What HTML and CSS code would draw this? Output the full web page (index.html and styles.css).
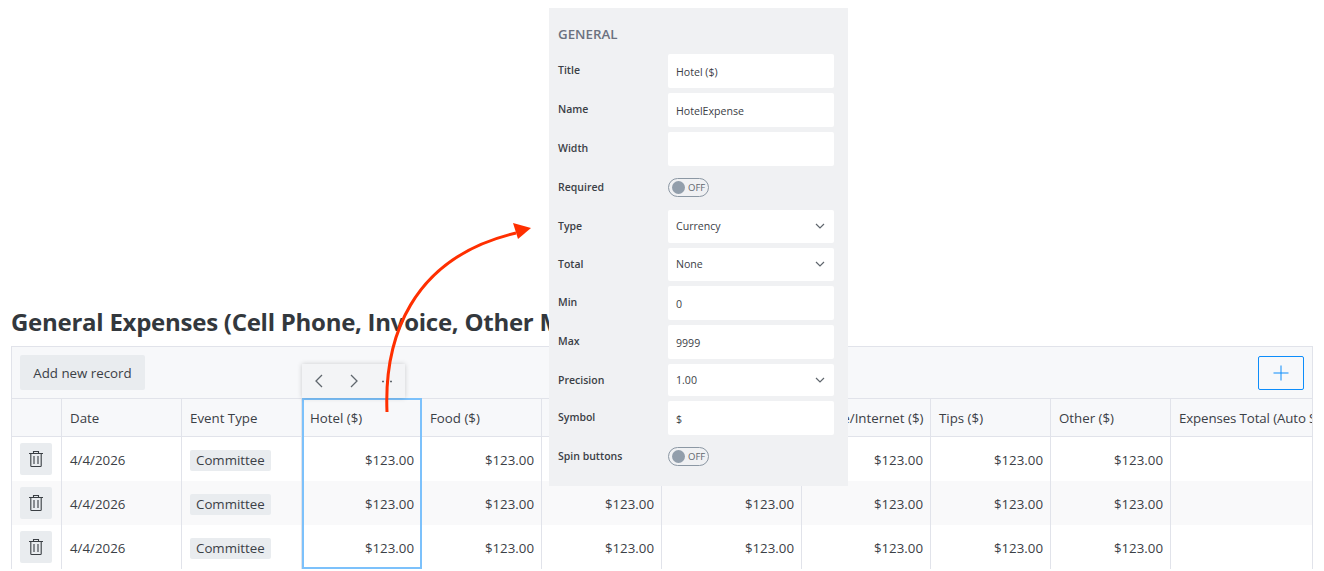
FILE: index.html
```html
<!DOCTYPE html>
<html lang="en">
<head>
<meta charset="utf-8">
<title>General Expenses</title>
<link rel="stylesheet" href="styles.css">
</head>
<body>
<div class="page">
  <h1 class="title">General Expenses (Cell Phone, Invoice, Other M</h1>
  <section class="grid-card">
    <div class="toolbar">
      <button class="btn-add">Add new record</button>
      <button class="btn-plus" aria-label="Add column"><svg width="16" height="16" viewBox="0 0 16 16"><path d="M8 .5v15M.5 8h15" stroke="#0d8dfb" stroke-width="1" fill="none"/></svg></button>
    </div>
    <div class="table-wrap">
      <table class="data">
        <colgroup>
          <col class="c-act"><col class="c-120"><col class="c-120"><col class="c-120"><col class="c-120"><col class="c-120"><col class="c-140"><col class="c-130"><col class="c-120"><col class="c-120"><col class="c-last">
        </colgroup>
        <thead>
          <tr><th></th><th>Date</th><th>Event Type</th><th>Hotel ($)</th><th>Food ($)</th><th></th><th></th><th class="th-right">Phone/Internet ($)</th><th>Tips ($)</th><th>Other ($)</th><th class="th-last">Expenses Total (Auto Sum)</th></tr>
        </thead>
        <tbody>
          <tr>
            <td class="cell-act"><button class="btn-del" aria-label="Delete"><svg width="16" height="18" viewBox="0 0 16 18"><path d="M1 3.5h14M5.500 3.500V1.500h5v2M2.800 3.500v12.200c0 .5.4.8.8.8h8.800c.4 0 .8-.3.8-.8V3.500M6 6v8M10 6v8" stroke="#3a3f44" stroke-width="1.100" fill="none"/></svg></button></td>
            <td>4/4/2026</td><td><span class="tag">Committee</span></td><td class="num">$123.00</td><td class="num">$123.00</td><td class="num"></td><td class="num"></td><td class="num">$123.00</td><td class="num">$123.00</td><td class="num">$123.00</td><td></td>
          </tr>
          <tr>
            <td class="cell-act"><button class="btn-del" aria-label="Delete"><svg width="16" height="18" viewBox="0 0 16 18"><path d="M1 3.5h14M5.500 3.500V1.500h5v2M2.800 3.500v12.200c0 .5.4.8.8.8h8.800c.4 0 .8-.3.8-.8V3.500M6 6v8M10 6v8" stroke="#3a3f44" stroke-width="1.100" fill="none"/></svg></button></td>
            <td>4/4/2026</td><td><span class="tag">Committee</span></td><td class="num">$123.00</td><td class="num">$123.00</td><td class="num">$123.00</td><td class="num">$123.00</td><td class="num">$123.00</td><td class="num">$123.00</td><td class="num">$123.00</td><td></td>
          </tr>
          <tr>
            <td class="cell-act"><button class="btn-del" aria-label="Delete"><svg width="16" height="18" viewBox="0 0 16 18"><path d="M1 3.5h14M5.500 3.500V1.500h5v2M2.800 3.500v12.200c0 .5.4.8.8.8h8.800c.4 0 .8-.3.8-.8V3.500M6 6v8M10 6v8" stroke="#3a3f44" stroke-width="1.100" fill="none"/></svg></button></td>
            <td>4/4/2026</td><td><span class="tag">Committee</span></td><td class="num">$123.00</td><td class="num">$123.00</td><td class="num">$123.00</td><td class="num">$123.00</td><td class="num">$123.00</td><td class="num">$123.00</td><td class="num">$123.00</td><td></td>
          </tr>
        </tbody>
      </table>
    </div>
  </section>

  <div class="col-select"></div>
  <div class="col-tools">
    <svg width="10" height="14" viewBox="0 0 10 14"><path d="M8 1 2 7l6 6" stroke="#5f666d" stroke-width="1.300" fill="none"/></svg>
    <svg width="10" height="14" viewBox="0 0 10 14"><path d="M2 1l6 6-6 6" stroke="#5f666d" stroke-width="1.300" fill="none"/></svg>
    <svg class="dots" width="12" height="14" viewBox="0 0 12 14"><path d="M1 7.500h2M5 7.500h2M9 7.500h2" stroke="#5f666d" stroke-width="1.500" fill="none"/></svg>
  </div>

  <svg class="arrow" width="1324" height="571" viewBox="0 0 1324 571">
    <path d="M387 412C384 340 410 258 516 233" stroke="#ff2f00" stroke-width="3" fill="none"/>
    <path d="M531 228 513 223 518 239Z" fill="#ff2f00"/>
  </svg>

  <aside class="panel">
    <h2 class="panel-head">GENERAL</h2>
    <div class="row"><label>Title</label><div class="field">Hotel ($)</div></div>
    <div class="row"><label>Name</label><div class="field">HotelExpense</div></div>
    <div class="row"><label>Width</label><div class="field"></div></div>
    <div class="row"><label>Required</label><div class="toggle toggle-up"><i class="knob"></i><span>OFF</span></div></div>
    <div class="row row-sel"><label>Type</label><div class="field select">Currency<svg width="10" height="6" viewBox="0 0 10 6"><path d="M1 1l4 4 4-4" stroke="#5f666d" stroke-width="1.200" fill="none"/></svg></div></div>
    <div class="row row-sel"><label>Total</label><div class="field select">None<svg width="10" height="6" viewBox="0 0 10 6"><path d="M1 1l4 4 4-4" stroke="#5f666d" stroke-width="1.200" fill="none"/></svg></div></div>
    <div class="row"><label>Min</label><div class="field">0</div></div>
    <div class="row"><label>Max</label><div class="field">9999</div></div>
    <div class="row row-sel2"><label>Precision</label><div class="field select">1.00<svg width="10" height="6" viewBox="0 0 10 6"><path d="M1 1l4 4 4-4" stroke="#5f666d" stroke-width="1.200" fill="none"/></svg></div></div>
    <div class="row"><label>Symbol</label><div class="field">$</div></div>
    <div class="row"><label>Spin buttons</label><div class="toggle toggle-up"><i class="knob"></i><span>OFF</span></div></div>
  </aside>
</div>
</body>
</html>
```
FILE: styles.css
```css
* { box-sizing: border-box; }
html, body { margin: 0; padding: 0; height: 571px; overflow: hidden; background: #fff; }
body { font-family: "Open Sans", "Noto Sans", sans-serif; font-size: 13.3px; color: #3b4046; }
.page { position: relative; width: 1324px; height: 571px; padding: 305px 11px 0; overflow: hidden; }
.title { margin: 0 0 7px; height: 34px; line-height: 34px; font-size: 24px; font-weight: 700; color: #33383d; white-space: nowrap; letter-spacing: -0.26px; }
.grid-card { width: 1302px; border: 1px solid #e1e3ea; border-bottom: 0; background: #fff; overflow: hidden; height: 223px; }
.toolbar { height: 51px; background: #f7f8fa; display: flex; justify-content: space-between; align-items: flex-start; padding: 8px 8px 0; }
button { font: inherit; color: inherit; border: 0; cursor: pointer; }
.btn-add { width: 125px; height: 35px; background: #e9ecef; border-radius: 2px; padding: 0; }
.btn-plus { width: 46px; height: 34px; margin-top: 1px; background: transparent; border: 1px solid #0d8dfb; border-radius: 2px; display: flex; align-items: center; justify-content: center; padding: 0; }
.table-wrap { overflow: hidden; }
.data { border-collapse: separate; border-spacing: 0; table-layout: fixed; width: 1360px; }
.c-act { width: 50px; } .c-120 { width: 120px; } .c-140 { width: 140px; } .c-130 { width: 129px; } .c-last { width: 201px; }
.data th { height: 39px; background: #f7f8fa; font-weight: 400; text-align: left; padding: 0 8px; white-space: nowrap; overflow: hidden; border-top: 1px solid #e1e3ea; border-bottom: 1px solid #e1e3ea; border-right: 1px solid #e1e3ea; }
.data .th-right { text-align: right; }
.data .th-last { letter-spacing: -0.12px; }
.data td { height: 44px; padding: 2px 7px 0 8px; border-right: 1px solid #e1e3ea; white-space: nowrap; }
.data .cell-act { padding-top: 0; }
.data tbody tr:nth-child(even) td { background: #f9f9fa; }
.num { text-align: right; }
.btn-del { width: 32px; height: 32px; background: #e9ecef; border-radius: 2px; display: flex; align-items: center; justify-content: center; padding: 0; }
.tag { display: inline-block; background: #e9ecef; border-radius: 2px; padding: 0 6px; line-height: 21px; }
.col-select { position: absolute; left: 302px; top: 398px; width: 120px; height: 171px; border: 2px solid #7cc1fb; }
.col-tools { position: absolute; left: 302px; top: 364px; width: 103px; height: 34px; background: #f3f4f6; box-shadow: 0 0 5px rgba(0,0,0,.18); display: flex; align-items: center; gap: 25px; padding-left: 12px; }
.dots { margin-left: -3px; }
.arrow { position: absolute; left: 0; top: 0; pointer-events: none; }
.panel { position: absolute; left: 549px; top: 8px; width: 299px; height: 478px; background: #f0f1f3; padding: 17px 14px 0 9px; display: flex; flex-direction: column; gap: 5px; font-size: 10.6px; }
.panel-head { margin: 0; height: 24px; line-height: 18px; font-size: 13.3px; font-weight: 600; color: #6b7280; }
.row { display: flex; align-items: center; justify-content: space-between; height: 34px; }
.row-sel { height: 33px; }
.row-sel2 { height: 32px; }
.row label { font-weight: 600; font-size: 10.5px; color: #3b4046; margin-top: -2px; }
.row-sel2 label { margin-top: 0; }
.field { width: 166px; height: 100%; background: #fff; border-radius: 2px; padding: 1px 8px 0; display: flex; align-items: center; justify-content: space-between; }
.select { padding: 0 9px 1px 8px; }
.row-sel2 .select { padding-bottom: 0; }
.toggle { width: 41px; height: 19px; margin-right: 125px; border: 1px solid #8c98a4; border-radius: 10px; display: flex; align-items: center; padding-left: 3px; gap: 3px; font-size: 9.5px; color: #5f666d; }
.toggle-up { margin-top: -2px; }
.knob { width: 13px; height: 13px; border-radius: 50%; background: #929eab; }
```
